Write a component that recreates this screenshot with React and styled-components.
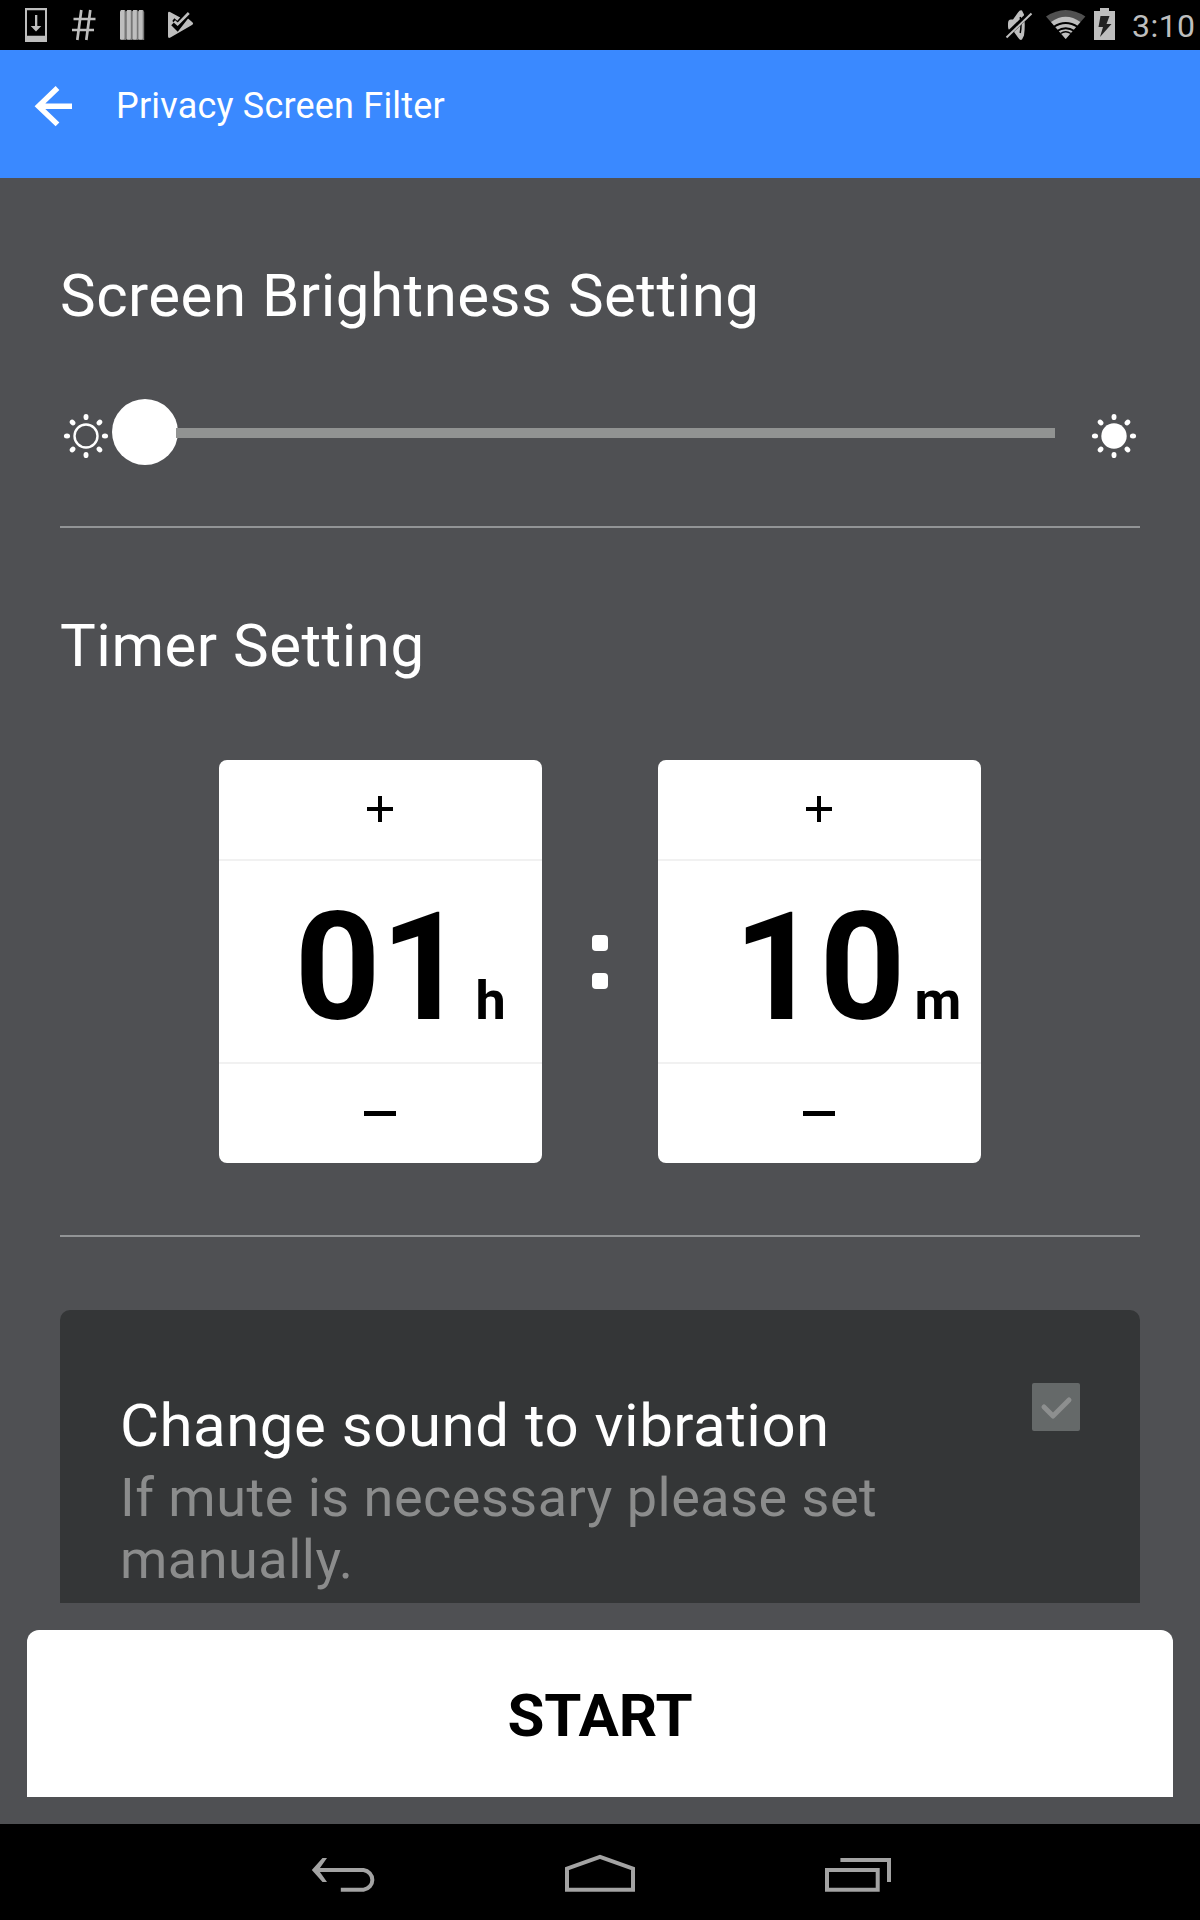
import React, { useState } from "react";
import styled, { createGlobalStyle } from "styled-components";

const GlobalStyle = createGlobalStyle`
  * { box-sizing: border-box; }
  body { margin: 0; background: #4f5053; font-family: Roboto, "Liberation Sans", sans-serif; }
  button { border: 0; padding: 0; background: none; font: inherit; color: inherit; }
`;

const Screen = styled.div`
  width: 1200px;
  height: 1920px;
  display: flex;
  flex-direction: column;
  overflow: hidden;
  background: #4f5053;
  color: #fff;
`;

const StatusBar = styled.header`
  height: 50px;
  flex: none;
  display: flex;
  justify-content: space-between;
  background: #000;
  color: #bebebe;
`;

const Clock = styled.span`
  width: 74px;
  flex: none;
  padding-left: 6px;
  font-size: 32px;
  line-height: 52px;
  letter-spacing: 0.45px;
  white-space: nowrap;
`;

const StatusGroup = styled.div`
  display: flex;
`;

const AppBar = styled.div`
  height: 128px;
  flex: none;
  display: flex;
  align-items: flex-start;
  padding: 34px 0 0 30px;
  background: #3a89ff;
`;

const BackButton = styled.button`
  width: 46px;
  height: 44px;
  margin-right: 40px;
  svg { display: block; }
`;

const AppTitle = styled.h1`
  margin: 0;
  font-size: 36px;
  font-weight: 400;
  line-height: 44px;
  letter-spacing: ${(p) => p.$spacing}px;
`;

const Content = styled.main`
  height: 1425px;
  flex: none;
  padding: 0 60px;
  overflow: hidden;
`;

const Section = styled.section`
  height: ${(p) => p.$height}px;
  border-bottom: 2px solid #929496;
  padding-top: ${(p) => p.$top}px;
`;

const Heading = styled.h2`
  margin: 0;
  font-size: 60px;
  font-weight: 400;
  line-height: 70px;
  letter-spacing: ${(p) => p.$spacing}px;
  white-space: nowrap;
`;

const SliderRow = styled.div`
  display: flex;
  align-items: center;
  height: 66px;
  margin-top: 68px;
`;

const SunIcon = styled.svg`
  width: 52px;
  height: 52px;
  flex: none;
  margin-top: 8px;
`;

const Range = styled.div`
  display: flex;
  align-items: center;
  width: 943px;
  margin-right: 33px;
`;

const Thumb = styled.div`
  width: 66px;
  height: 66px;
  border-radius: 50%;
  background: #fff;
  flex: none;
`;

const Track = styled.div`
  height: 10px;
  flex: 1;
  margin: 2px 0 0 -2px;
  background: #919392;
`;

const TimerRow = styled.div`
  display: flex;
  justify-content: center;
  align-items: center;
  gap: 50px;
  margin: 79px 1px 0 0;
`;

const Spinner = styled.div`
  width: 323px;
  height: 403px;
  border-radius: 8px;
  background: #fff;
  color: #000;
  display: flex;
  flex-direction: column;
`;

const StepButton = styled.button`
  height: 99px;
  display: flex;
  align-items: center;
  justify-content: center;
  padding: 0 0 1px 0;
`;

const Value = styled.div`
  height: 205px;
  border: solid #f1f1f1;
  border-width: 2px 0;
  display: flex;
  align-items: baseline;
  padding-left: 76px;
  font-weight: 700;
`;

const Digits = styled.span`
  width: 173px;
  font-size: 150px;
  line-height: 214px;
  white-space: nowrap;
`;

const Unit = styled.span`
  font-size: 54px;
  padding-left: ${(p) => p.$inset}px;
`;

const Colon = styled.div`
  display: flex;
  flex-direction: column;
  gap: 22px;
  width: 16px;
`;

const Dot = styled.i`
  height: 16px;
  border-radius: 4px;
  background: #fff;
`;

const OptionPanel = styled.section`
  height: 320px;
  margin-top: 73px;
  padding: 73px 60px 0;
  border-radius: 10px;
  background: #343637;
  display: flex;
  align-items: flex-start;
  justify-content: space-between;
`;

const OptionText = styled.div`
  width: 800px;
  padding-top: 8px;
`;

const Hint = styled.p`
  margin: 6px 0 0;
  font-size: 54px;
  line-height: 62px;
  color: #8b8c8c;
`;

const HintLine = styled.span`
  display: block;
  letter-spacing: ${(p) => p.$spacing}px;
`;

const Checkbox = styled.button`
  width: 48px;
  height: 48px;
  border-radius: 2px;
  background: #656969;
  svg { display: block; }
`;

const Footer = styled.footer`
  height: 221px;
  flex: none;
  padding: 27px;
`;

const StartButton = styled.button`
  width: 1146px;
  height: 167px;
  border-radius: 12px 12px 0 0;
  background: #fff;
  color: #000;
  font-size: 60px;
  font-weight: 700;
  line-height: 70px;
  padding-top: 4px;
  letter-spacing: 0px;
`;

const NavBar = styled.nav`
  height: 96px;
  flex: none;
  background: #000;
  display: flex;
  justify-content: center;
  gap: 160px;
`;

const NavButton = styled.button`
  width: 100px;
  height: 96px;
  svg { display: block; }
`;

function Sun({ filled }) {
  return (
    <SunIcon viewBox="-26 -26 52 52">
      <circle r={filled ? 12.7 : 11.5} fill={filled ? "#fff" : "none"} stroke="#fff" strokeWidth={filled ? 0 : 2.4} />
      {[0, 45, 90, 135, 180, 225, 270, 315].map((a) => (
        <ellipse key={a} cx="0" cy="-19" rx="2.5" ry="3.1" fill="#fff" transform={`rotate(${a})`} />
      ))}
    </SunIcon>
  );
}

function TimeSpinner({ value, unit, inset, onStep }) {
  return (
    <Spinner>
      <StepButton aria-label="Increase" onClick={() => onStep(1)}>
        <svg width="26" height="26" viewBox="0 0 26 26">
          <path d="M11 0h4v11h11v4H15v11h-4V15H0v-4h11z" />
        </svg>
      </StepButton>
      <Value>
        <Digits>{String(value).padStart(2, "0")}</Digits>
        <Unit $inset={inset}>{unit}</Unit>
      </Value>
      <StepButton aria-label="Decrease" onClick={() => onStep(-1)}>
        <svg width="32" height="5" viewBox="0 0 32 5">
          <path d="M0 0h32v5H0z" />
        </svg>
      </StepButton>
    </Spinner>
  );
}

export default function App() {
  const [hours, setHours] = useState(1);
  const [minutes, setMinutes] = useState(10);
  return (
    <Screen>
      <GlobalStyle />
      <StatusBar>
        <svg width="220" height="50" viewBox="0 0 220 50" fill="#bebebe">
          <path fillRule="evenodd" d="M25 8h22v34H25zM27 10.300v25.500h18V10.300z" />
          <path d="M35 15h2.300v11h4L36 31.500 30.700 26H35z" />
          <path d="M81.300 10 77.300 40M90.300 10l-4 30M73.500 19h22M72 30h22" fill="none" stroke="#bebebe" strokeWidth="2.700" />
          {[120, 126.3, 132.3, 138.2].map((x) => (
            <g key={x}>
              <path d={`M${x + 1} 10h4l1 2v28h-5z`} fill="#777" />
              <path d={`M${x} 11.500l1-1.500h3.500v28.500l-1 1H${x}z`} />
            </g>
          ))}
          <path d="M168 13.200q0-2 2-1.300l10.200 5.600-2.900 3.200-3-2.400-2 2.800 5.700 5.400 9.400-8.500 5 4.200q1.500 1.300 0 2.600l-22 12.700q-2.400 1.200-2.400-1.300z" />
          <path d="m173 23.500 4.500 4.400L189 13.200" fill="none" stroke="#000" strokeWidth="5" />
          <path d="m174.300 21.300 3.300 3L188.800 13" fill="none" stroke="#bebebe" strokeWidth="2.600" />
        </svg>
        <StatusGroup>
          <svg width="125" height="50" viewBox="1000 0 125 50" fill="#bebebe">
            <path d="M1007 23.500q0-4 3-4h2l5-7q2-3 4-2l2 4q1.500 11 0 21l-2 4q-2 1.500-4-2l-5-7h-2q-3 0-3-4z" />
            <path d="M1019.200 17q1.700 7 0 16" fill="none" stroke="#000" strokeWidth="1.500" />
            <path d="m1004.500 36.500 25-24" stroke="#000" strokeWidth="5" />
            <path d="m1005.500 37.500 25-24" stroke="#bebebe" strokeWidth="2" />
            <path d="M1064.700 39 1045 16.500q19.700-13 39.400 0z" fill="#505050" />
            <path d="M1064.700 39 1050 22q14.700-10.500 29.400 0z" />
            <path d="M1052.500 27q12.200-8 24.400 0M1056 31q8.700-5.500 17.400 0M1060 35" fill="none" stroke="#000" strokeWidth="1.800" />
            <path d="M1059.500 33.500q5.200-3.500 10.400 0" fill="none" stroke="#000" strokeWidth="1.500" />
            <path d="M1099 8h9v3h6v29h-21V11h6z" />
            <path d="m1099.500 16h9l-3 8h5l-11.500 13 3-10h-4.500z" fill="#222" />
          </svg>
          <Clock>3:10</Clock>
        </StatusGroup>
      </StatusBar>
      <AppBar>
        <BackButton aria-label="Back">
          <svg width="46" height="44" viewBox="30 84 46 44">
            <path d="m57.500 88-19 18.200 19 18.200M39 106.200h33" fill="none" stroke="#fff" strokeWidth="5.400" />
          </svg>
        </BackButton>
        <AppTitle $spacing={0.2}>Privacy Screen Filter</AppTitle>
      </AppBar>
      <Content>
        <Section $height={350} $top={83}>
          <Heading $spacing={0.5}>Screen Brightness Setting</Heading>
          <SliderRow>
            <Sun />
            <Range>
              <Thumb />
              <Track />
            </Range>
            <Sun filled />
          </SliderRow>
        </Section>
        <Section $height={709} $top={83}>
          <Heading $spacing={0.5}>Timer Setting</Heading>
          <TimerRow>
            <TimeSpinner value={hours} unit="h" inset={8} onStep={(n) => setHours((hours + n + 24) % 24)} />
            <Colon>
              <Dot />
              <Dot />
            </Colon>
            <TimeSpinner value={minutes} unit="m" inset={8} onStep={(n) => setMinutes((minutes + n + 60) % 60)} />
          </TimerRow>
        </Section>
        <OptionPanel>
          <OptionText>
            <Heading $spacing={0.5}>Change sound to vibration</Heading>
            <Hint>
              <HintLine $spacing={0.5}>If mute is necessary please set</HintLine>
              <HintLine $spacing={0.5}>manually.</HintLine>
            </Hint>
          </OptionText>
          <Checkbox aria-label="Change sound to vibration">
            <svg width="48" height="48" viewBox="0 0 48 48">
              <path d="m12 24 9 9 16-16" fill="none" stroke="#8d8f8f" strokeWidth="5" strokeLinecap="round" strokeLinejoin="round" />
            </svg>
          </Checkbox>
        </OptionPanel>
      </Content>
      <Footer>
        <StartButton>START</StartButton>
      </Footer>
      <NavBar>
        <NavButton aria-label="Back">
          <svg width="100" height="96" viewBox="290 1824 100 96" fill="none" stroke="#a3a3a3" strokeWidth="4">
            <path d="M314 1870h49.500a10.300 10 0 0 1 0 19.800h-22.700" />
            <path d="M322.500 1858h4.500l-8.500 12 8.500 12h-4.500l-10.700-12z" fill="#a3a3a3" stroke="none" />
          </svg>
        </NavButton>
        <NavButton aria-label="Home">
          <svg width="100" height="96" viewBox="550 1824 100 96" fill="none" stroke="#a3a3a3" strokeWidth="4">
            <path d="M567 1889.700v-21.100l33-11.700 33 11.700v21.100z" />
          </svg>
        </NavButton>
        <NavButton aria-label="Recent apps">
          <svg width="100" height="96" viewBox="810 1824 100 96" fill="none" stroke="#a3a3a3" strokeWidth="4">
            <path d="M827 1870h50.700v19.700H827zM840.400 1860H889v22" />
          </svg>
        </NavButton>
      </NavBar>
    </Screen>
  );
}
